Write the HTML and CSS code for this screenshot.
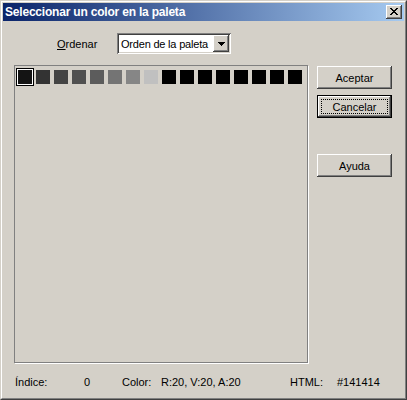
FILE: index.html
```html
<!DOCTYPE html>
<html lang="es">
<head>
<meta charset="utf-8">
<title>Seleccionar un color en la paleta</title>
<link rel="stylesheet" href="styles.css">
</head>
<body>
<div class="window">
  <div class="frame">
    <div class="titlebar">
      <span class="title">Seleccionar un color en la paleta</span>
      <button class="close" aria-label="Cerrar">
        <svg width="8" height="7" viewBox="0 0 8 7" shape-rendering="crispEdges">
          <path d="M0 0h2v1H0zM6 0h2v1H6zM1 1h2v1H1zM5 1h2v1H5zM2 2h4v1H2zM3 3h2v1H3zM2 4h4v1H2zM1 5h2v1H1zM5 5h2v1H5zM0 6h2v1H0zM6 6h2v1H6z" fill="#000"/>
        </svg>
      </button>
    </div>
    <div class="content">
      <div class="sort-row">
        <span class="sort-label"><u>O</u>rdenar</span>
        <div class="combo">
          <span class="combo-text">Orden de la paleta</span>
          <span class="combo-btn">
            <svg width="7" height="4" viewBox="0 0 7 4" shape-rendering="crispEdges">
              <path d="M0 0h7v1H0zM1 1h5v1H1zM2 2h3v1H2zM3 3h1v1H3z" fill="#000"/>
            </svg>
          </span>
        </div>
      </div>
      <div class="main-row">
        <div class="palette">
          <div class="swatches">
            <span class="swatch selected" style="background:#141414"></span>
            <span class="swatch" style="background:#333333"></span>
            <span class="swatch" style="background:#444444"></span>
            <span class="swatch" style="background:#505050"></span>
            <span class="swatch" style="background:#5c5c5c"></span>
            <span class="swatch" style="background:#747474"></span>
            <span class="swatch" style="background:#868686"></span>
            <span class="swatch" style="background:#c0c0c0"></span>
            <span class="swatch" style="background:#000000"></span>
            <span class="swatch" style="background:#000000"></span>
            <span class="swatch" style="background:#000000"></span>
            <span class="swatch" style="background:#000000"></span>
            <span class="swatch" style="background:#000000"></span>
            <span class="swatch" style="background:#000000"></span>
            <span class="swatch" style="background:#000000"></span>
            <span class="swatch" style="background:#000000"></span>
          </div>
        </div>
        <div class="buttons">
          <button class="btn">Aceptar</button>
          <button class="btn default"><span class="focus">Cancelar</span></button>
          <button class="btn help">Ayuda</button>
        </div>
      </div>
      <div class="status">
        <span class="s-index-label">Índice:</span>
        <span class="s-index">0</span>
        <span class="s-color-label">Color:</span>
        <span class="s-color">R:20, V:20, A:20</span>
        <span class="s-html-label">HTML:</span>
        <span class="s-html">#141414</span>
      </div>
    </div>
  </div>
</div>
</body>
</html>
```
FILE: styles.css
```css
* { box-sizing: border-box; }
html, body { margin: 0; padding: 0; }
body {
  width: 407px;
  height: 400px;
  background: #d4d0c8;
  font-family: "Liberation Sans", Arial, sans-serif;
  font-size: 11px;
  color: #000;
}
.window {
  width: 407px;
  height: 400px;
  border: 1px solid;
  border-color: #d4d0c8 #404040 #404040 #d4d0c8;
}
.frame {
  height: 100%;
  border: 1px solid;
  border-color: #fff #808080 #808080 #fff;
  padding: 1px;
  background: #d4d0c8;
  display: flex;
  flex-direction: column;
}
.titlebar {
  height: 18px;
  flex: none;
  display: flex;
  align-items: center;
  justify-content: space-between;
  padding: 0 2px 0 2px;
  background: linear-gradient(to right, #0a246a, #a6caf0);
}
.title {
  color: #fff;
  font-weight: bold;
  font-size: 12px;
  letter-spacing: -0.2px;
  white-space: nowrap;
}
.close {
  width: 16px;
  height: 14px;
  padding: 0;
  margin: 0;
  border: none;
  background: #d4d0c8;
  box-shadow: inset -1px -1px #404040, inset 1px 1px #fff, inset -2px -2px #808080, inset 2px 2px #d4d0c8;
  display: flex;
  align-items: center;
  justify-content: center;
}
.close svg { display: block; margin: 0 0 1px 0; }
.content {
  flex: 1;
  padding-top: 12px;
}
.sort-row {
  display: flex;
  align-items: center;
  padding-left: 54px;
  height: 21px;
}
.sort-label {
  width: 60px;
}
.sort-label u { text-decoration: underline; text-underline-offset: 1px; }
.combo {
  width: 114px;
  height: 21px;
  background: #fff;
  box-shadow: inset 1px 1px #808080, inset -1px -1px #fff, inset 2px 2px #404040, inset -2px -2px #d4d0c8;
  display: flex;
  align-items: center;
  justify-content: space-between;
  padding: 2px;
}
.combo-text {
  padding-left: 2px;
  white-space: nowrap;
  letter-spacing: -0.2px;
}
.combo-btn {
  width: 16px;
  height: 17px;
  flex: none;
  background: #d4d0c8;
  box-shadow: inset -1px -1px #404040, inset 1px 1px #fff, inset -2px -2px #808080, inset 2px 2px #d4d0c8;
  display: flex;
  align-items: center;
  justify-content: center;
}
.combo-btn svg { display: block; }
.main-row {
  display: flex;
  align-items: flex-start;
  margin-top: 11px;
  padding-left: 11px;
}
.palette {
  width: 294px;
  height: 298px;
  border: 1px solid #808080;
  box-shadow: 1px 1px 0 #fff;
}
.swatches {
  display: flex;
  gap: 4px;
  padding: 4px 0 0 3px;
}
.swatch {
  display: block;
  width: 14px;
  height: 14px;
  flex: none;
}
.swatch.selected {
  box-shadow: 0 0 0 1px #fff, 0 0 0 2px #000;
}
.buttons {
  display: flex;
  flex-direction: column;
  margin-left: 9px;
  padding-top: 1px;
  gap: 6px;
}
.btn {
  width: 75px;
  height: 23px;
  padding: 0;
  margin: 0;
  border: none;
  background: #d4d0c8;
  box-shadow: inset -1px -1px #404040, inset 1px 1px #fff, inset -2px -2px #808080, inset 2px 2px #d4d0c8;
  font-family: "Liberation Sans", Arial, sans-serif;
  font-size: 11px;
  color: #000;
  display: flex;
  align-items: center;
  justify-content: center;
}
.btn.default {
  border: 1px solid #000;
  padding: 3px;
}
.btn.default .focus {
  flex: 1;
  align-self: stretch;
  display: flex;
  align-items: center;
  justify-content: center;
  border: 1px dotted #000;
}
.btn.help { margin-top: 30px; }
.status {
  display: flex;
  align-items: center;
  margin-top: 12px;
  padding-left: 12px;
  height: 13px;
  white-space: nowrap;
}
.s-index-label { width: 69px; }
.s-index { width: 38px; }
.s-color-label { width: 39px; }
.s-color { width: 129px; }
.s-html-label { width: 47px; }
```
